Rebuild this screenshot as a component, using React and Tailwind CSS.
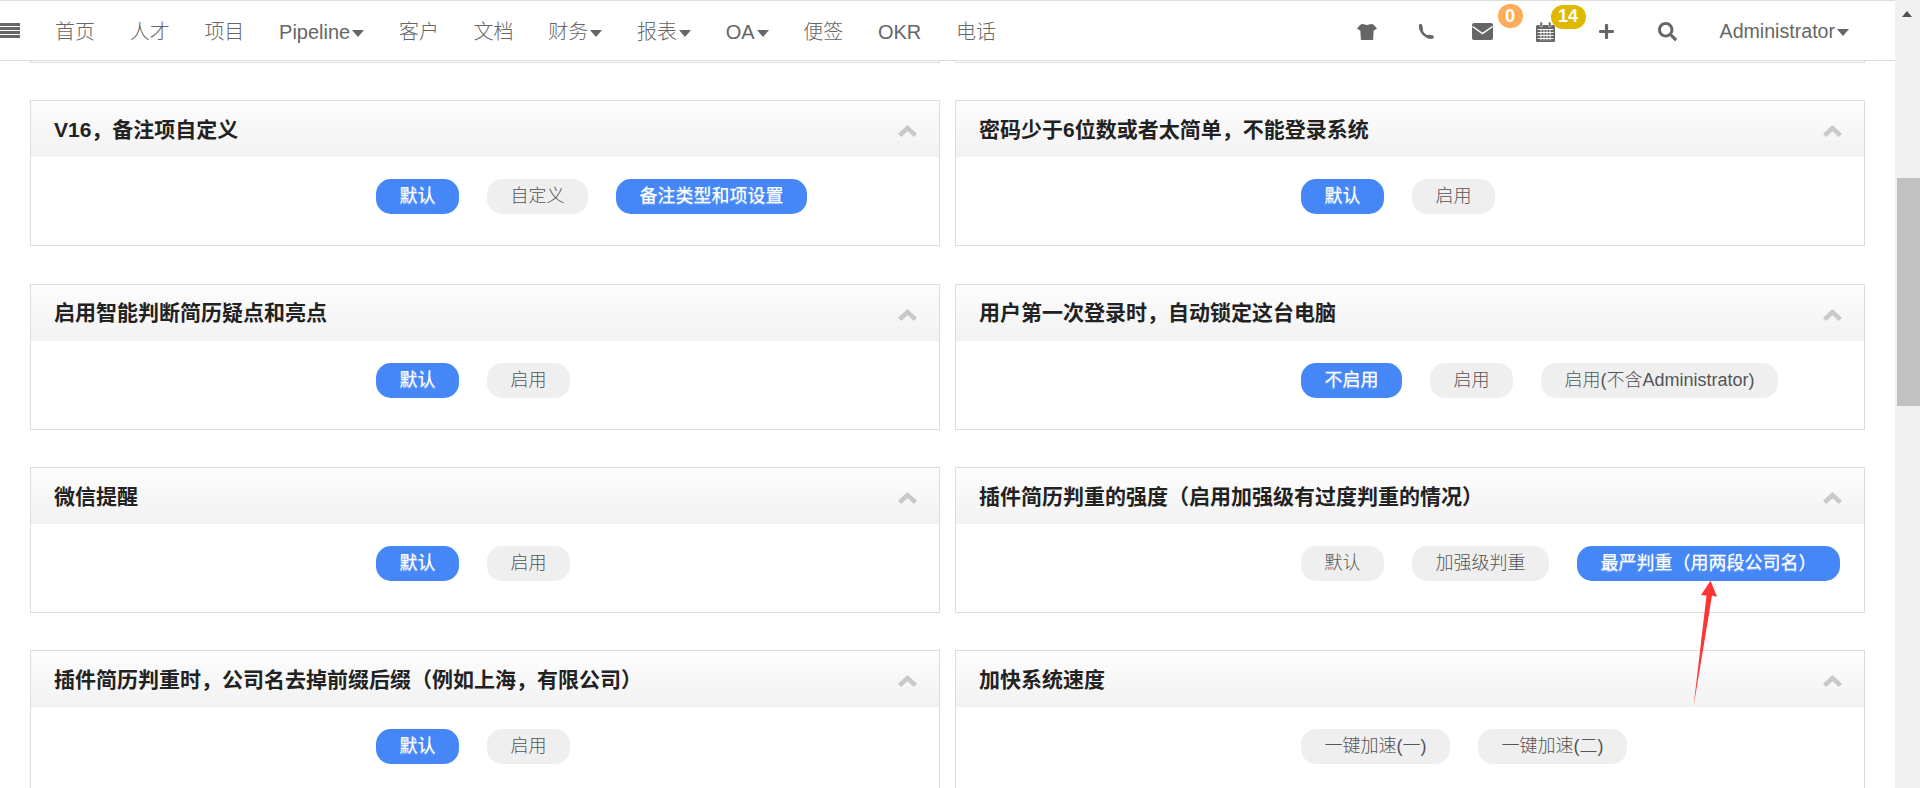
import React from "react";
import { FaPlus, FaSearch } from "react-icons/fa";

const navItems = [
  { label: "首页" },
  { label: "人才" },
  { label: "项目" },
  { label: "Pipeline", caret: true },
  { label: "客户" },
  { label: "文档" },
  { label: "财务", caret: true },
  { label: "报表", caret: true },
  { label: "OA", caret: true },
  { label: "便签" },
  { label: "OKR" },
  { label: "电话" },
];

const cards = [
  // these two are scrolled up behind the header
  { title: "", options: [] },
  { title: "", options: [] },
  {
    title: "V16，备注项自定义",
    options: [
      { label: "默认", active: true },
      { label: "自定义" },
      { label: "备注类型和项设置", active: true },
    ],
  },
  {
    title: "密码少于6位数或者太简单，不能登录系统",
    options: [{ label: "默认", active: true }, { label: "启用" }],
  },
  {
    title: "启用智能判断简历疑点和亮点",
    options: [{ label: "默认", active: true }, { label: "启用" }],
  },
  {
    title: "用户第一次登录时，自动锁定这台电脑",
    options: [
      { label: "不启用", active: true },
      { label: "启用" },
      { label: "启用(不含Administrator)" },
    ],
  },
  {
    title: "微信提醒",
    options: [{ label: "默认", active: true }, { label: "启用" }],
  },
  {
    title: "插件简历判重的强度（启用加强级有过度判重的情况）",
    options: [
      { label: "默认" },
      { label: "加强级判重" },
      { label: "最严判重（用两段公司名）", active: true },
    ],
  },
  {
    title: "插件简历判重时，公司名去掉前缀后缀（例如上海，有限公司）",
    options: [{ label: "默认", active: true }, { label: "启用" }],
  },
  {
    title: "加快系统速度",
    options: [{ label: "一键加速(一)" }, { label: "一键加速(二)" }],
  },
];

const Caret = () => (
  <span className="ml-[2px] mt-[3px] inline-block h-0 w-0 border-x-[6.5px] border-t-[7px] border-x-transparent border-t-[#666]" />
);

const ShirtIcon = () => (
  <svg width="20" height="16" viewBox="0 0 20 16">
    <path
      d="M4.5 0 L7 0.3 Q10 1.8 13 0.3 L15.5 0 Q18 1.5 20 4.5 L16.6 6.8 L16.2 15.2 Q16.2 16 15.4 16 L4.6 16 Q3.8 16 3.8 15.2 L3.4 6.8 L0 4.5 Q2 1.5 4.5 0 Z"
      fill="#666"
    />
  </svg>
);

const PhoneIcon = () => (
  <svg width="16" height="16" viewBox="0 0 16 16" fill="none" stroke="#666" strokeLinecap="round">
    <path d="M2.6 3 C2.4 8 7.5 13.6 13 13.4" strokeWidth="2.4" />
    <path d="M2.6 1.8 L3.2 5.2" strokeWidth="3.6" />
    <path d="M10.6 12.6 L14 13" strokeWidth="3.6" />
  </svg>
);

const EnvelopeIcon = () => (
  <svg width="21" height="17" viewBox="0 0 21 17">
    <rect x="0" y="0" width="21" height="17" rx="2" fill="#666" />
    <path d="M0.5 3.5 L10.5 10.5 L20.5 3.5" fill="none" stroke="#fff" strokeWidth="1.5" />
  </svg>
);

const CalendarIcon = () => (
  <svg width="19" height="20" viewBox="0 0 19 20">
    <rect x="0" y="3" width="19" height="17" rx="1.5" fill="#666" />
    <rect x="4" y="0" width="2.5" height="5" rx="1" fill="#666" stroke="#fff" strokeWidth="0.5" />
    <rect x="12.5" y="0" width="2.5" height="5" rx="1" fill="#666" stroke="#fff" strokeWidth="0.5" />
    <path
      d="M1.5 7.5H17.5M1.5 10.5H17.5M1.5 13.5H17.5M1.5 16.5H17.5M5 7V18.5M8 7V18.5M11 7V18.5M14 7V18.5"
      stroke="#fff"
      strokeWidth="0.9"
    />
  </svg>
);

const ChevronUp = () => (
  <svg className="mt-[4px]" width="19" height="12" viewBox="0 0 19 12">
    <path d="M0 8.8 L9.5 0 L19 8.8 L15.8 12 L9.5 6.2 L3.2 12 Z" fill="#c9c9c9" />
  </svg>
);

const OptionButton = ({ label, active }) => (
  <button
    className={
      active
        ? "h-[35px] rounded-[15px] bg-[#4587f7] px-[23.5px] text-[18px] text-white [text-shadow:0_1px_1px_rgba(255,255,255,0.6)]"
        : "h-[35px] rounded-[15px] bg-[#efefef] px-[23.5px] text-[18px] font-light text-[#555]"
    }
  >
    {label}
  </button>
);

const SettingCard = ({ title, options }) => (
  <div className="h-[146px] border border-[#ddd] bg-white">
    <div className="flex h-[56px] items-center justify-between bg-gradient-to-b from-[#fdfdfd] to-[#f2f2f2] pl-[23px] pr-[22px]">
      <h3 className="pt-[1px] text-[21px] font-bold text-[#222]">{title}</h3>
      <ChevronUp />
    </div>
    <div className="flex gap-[28px] pl-[345px] pt-[22px]">
      {options.map((option) => (
        <OptionButton key={option.label} label={option.label} active={option.active} />
      ))}
    </div>
  </div>
);

const App = () => {
  return (
    <div className="relative flex h-[788px] overflow-hidden bg-white font-['Liberation_Sans','Noto_Sans_CJK_SC',sans-serif]">
      <div className="relative w-[1895px] overflow-hidden">
        {/* Header */}
        <div className="absolute inset-x-0 top-0 z-10 flex h-[61px] items-center justify-between border-y border-[#ddd] bg-white pr-[46px] pt-[2px] font-light text-[#666]">
          <div className="flex items-center text-[20px]">
            <div className="mb-[2px] flex h-[16px] w-[20px] flex-col justify-between">
              <span className="h-[3px] bg-[#666]" />
              <span className="h-[3px] bg-[#666]" />
              <span className="h-[3px] bg-[#666]" />
              <span className="h-[3px] bg-[#666]" />
            </div>
            <nav className="ml-[35px] flex items-center gap-[34.7px]">
              {navItems.map((item) => (
                <a key={item.label} className="flex items-center">
                  {item.label}
                  {item.caret && <Caret />}
                </a>
              ))}
            </nav>
          </div>

          <div className="flex items-center text-[19.6px]">
            <div className="flex items-center pt-[1px]">
              <ShirtIcon />
              <span className="ml-[41px] flex">
                <PhoneIcon />
              </span>
              <div className="relative ml-[38px] flex">
                <EnvelopeIcon />
                <span className="absolute left-[26px] top-[-19px] flex h-[24px] w-[25px] items-center justify-center rounded-full bg-[#fdad5a] text-[18px] font-bold text-white">
                  0
                </span>
              </div>
              <div className="relative ml-[43px] flex">
                <CalendarIcon />
                <span className="absolute left-[15px] top-[-17px] flex h-[24px] w-[35px] items-center justify-center rounded-full bg-[#e0b800] text-[18px] font-bold text-white">
                  14
                </span>
              </div>
              <FaPlus className="ml-[43px] text-[17px]" />
              <FaSearch className="ml-[43px] text-[19px]" />
            </div>
            <a className="ml-[43px] flex items-center">
              Administrator
              <Caret />
            </a>
          </div>
        </div>

        {/* Settings grid */}
        <div className="mt-[-83px] grid grid-cols-2 gap-x-[15px] gap-y-[37.33px] pl-[30px] pr-[30px]">
          {cards.map((card, index) => (
            <SettingCard key={index} title={card.title} options={card.options} />
          ))}
        </div>
      </div>

      {/* Scrollbar */}
      <div className="relative w-[25px] bg-[#f1f1f1]">
        <div className="absolute left-[7px] top-[11px] h-0 w-0 border-x-[5.5px] border-b-[6px] border-x-transparent border-b-[#505050]" />
        <div className="absolute inset-x-0 left-[2px] top-[178px] h-[228px] bg-[#c1c1c1]" />
      </div>

      {/* Red annotation arrow */}
      <svg className="absolute left-[1690px] top-[578px]" width="32" height="132" viewBox="0 0 32 132">
        <path d="M20.6 2.7 L27 18.7 L22 17.5 L3.5 128.7 L16.5 17.5 L11 17 Z" fill="#ff3333" />
      </svg>
    </div>
  );
};

export default App;
